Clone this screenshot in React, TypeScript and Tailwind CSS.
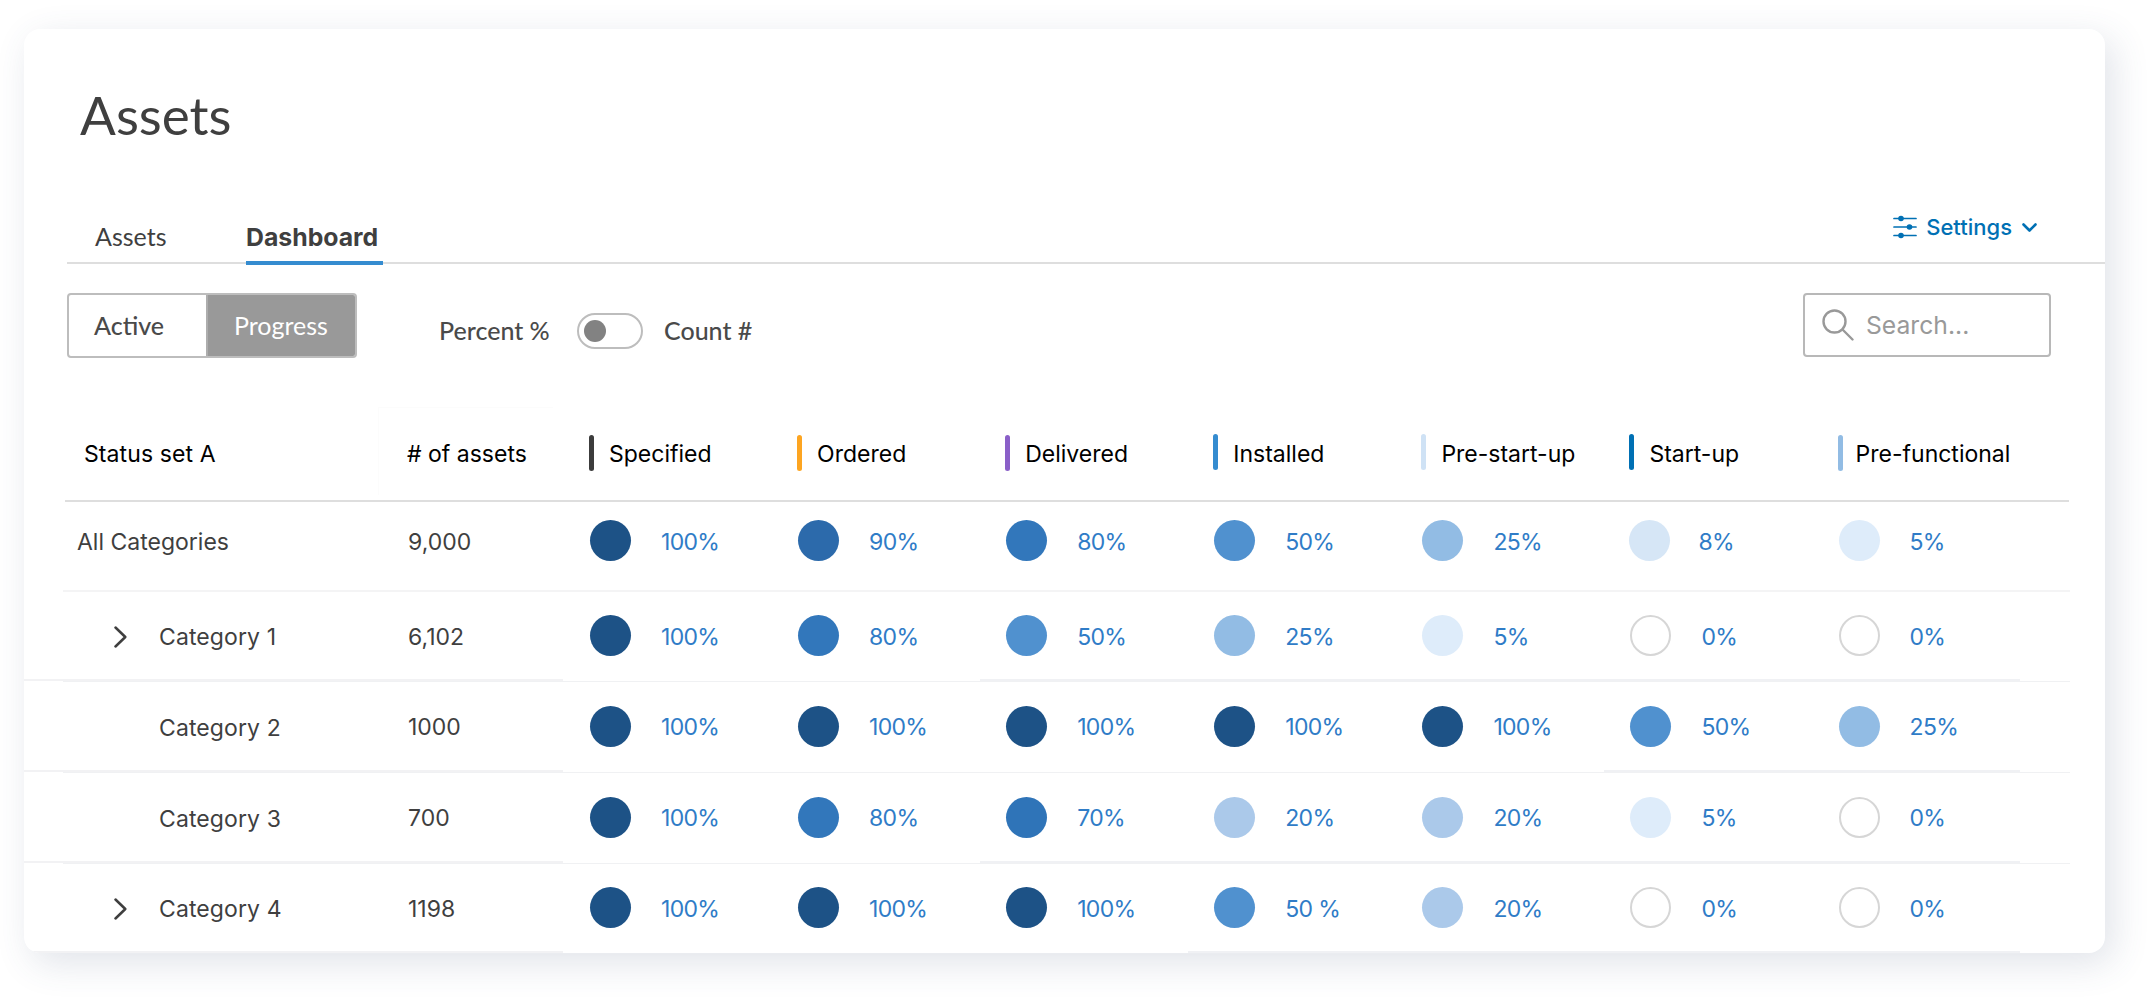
import React from 'react';
import clsx from 'clsx';

interface Status {
    label: string;
    bar: string;
}

interface Row {
    name: string;
    count: string;
    height: string;
    nested?: boolean;
    expandable?: boolean;
    divider?: string;
    values: string[];
}

const statuses: Status[] = [
    { label: 'Specified', bar: 'bg-[#3c3c3c] mt-px mr-[15px]' },
    { label: 'Ordered', bar: 'bg-[#fda521] mt-px mr-[15px]' },
    { label: 'Delivered', bar: 'bg-[#8a5fc8] mt-px mr-[15px]' },
    { label: 'Installed', bar: 'bg-[#358cd0] mr-[15px]' },
    { label: 'Pre-start-up', bar: 'bg-[#cfe2f5] mr-[15px]' },
    { label: 'Start-up', bar: 'bg-[#0070b4] mr-[15px]' },
    { label: 'Pre-functional', bar: 'bg-[#92bce4] mt-px mr-[13px]' },
];

// divider: where the heavier rule picks up again on the right side
const rows: Row[] = [
    { name: 'All Categories', count: '9,000', height: 'h-[88px] pb-[11px]', values: ['100%', '90%', '80%', '50%', '25%', '8%', '5%'] },
    { name: 'Category 1', count: '6,102', height: 'h-[87px]', nested: true, expandable: true, divider: 'w-[1040px]', values: ['100%', '80%', '50%', '25%', '5%', '0%', '0%'] },
    { name: 'Category 2', count: '1000', height: 'h-[88px]', nested: true, divider: 'w-[416px]', values: ['100%', '100%', '100%', '100%', '100%', '50%', '25%'] },
    { name: 'Category 3', count: '700', height: 'h-[88px]', nested: true, divider: 'w-[1040px]', values: ['100%', '80%', '70%', '20%', '20%', '5%', '0%'] },
    { name: 'Category 4', count: '1198', height: 'h-[87px]', nested: true, expandable: true, divider: 'w-[832px]', values: ['100%', '100%', '100%', '50 %', '20%', '0%', '0%'] },
];

const dotColors: Record<string, string> = {
    '100%': 'mr-[30px] bg-[#1d5286]',
    '90%': 'mr-[30px] bg-[#2c6aab]',
    '80%': 'mr-[30px] bg-[#3277bb]',
    '70%': 'mr-[30px] bg-[#2f74b8]',
    '50%': 'mr-[30px] bg-[#5091cf]',
    '50 %': 'mr-[30px] bg-[#5091cf]',
    '25%': 'mr-[30px] bg-[#92bce4]',
    '20%': 'mr-[30px] bg-[#abc9ea]',
    '8%': 'mr-[28px] -ml-px bg-[#d6e6f6]',
    '5%': 'mr-[30px] bg-[#deecfa]',
    '0%': 'mr-[30px] border-2 border-[#d6d6d6] bg-white',
};

const App: React.FC = () => {
    return (
        <div className="h-[997px] w-[2152px] overflow-hidden bg-white pl-6 pt-[29px] font-['Inter',sans-serif] text-[#3f3f3f]">
            <div className="h-[924px] w-[2081px] overflow-hidden rounded-2xl bg-white shadow-[8px_10px_36px_rgba(60,80,120,0.16)]">
                <h1 className="ml-14 h-[171px] pt-[54px] font-['Lato',sans-serif] text-[53px] leading-[64px]">Assets</h1>

                <div className="ml-[43px] flex h-[64px] items-stretch border-b-2 border-[#dedede] font-['Lato',sans-serif] text-[25px] leading-8">
                    <div className="ml-7 w-[151px] pt-5">Assets</div>
                    <div className="-mb-[3px] w-[137px] border-b-4 border-[#358cd0] pt-[21px] font-['Inter',sans-serif] text-[24.8px] leading-8 font-bold">Dashboard</div>
                    <div className="ml-auto mr-[68px] flex items-start pt-[11px] font-['Inter',sans-serif] text-[22px] font-medium text-[#0070b4]">
                        <svg className="mr-[9px] mt-1 h-6 w-6" viewBox="0 0 24 24" fill="currentColor">
                            <path d="M1 3.5h22M1 12h22M1 20.5h22" stroke="currentColor" strokeWidth="1.7" strokeLinecap="round" />
                            <circle cx="8" cy="3.5" r="2.8" />
                            <circle cx="16.5" cy="12" r="2.8" />
                            <circle cx="8" cy="20.5" r="2.8" />
                        </svg>
                        Settings
                        <svg className="ml-[10px] mt-3 h-[9px] w-[15px]" viewBox="0 0 15 9" fill="none" stroke="currentColor" strokeWidth="2.6" strokeLinecap="round" strokeLinejoin="round">
                            <path d="M1.5 1.5l6 6 6-6" />
                        </svg>
                    </div>
                </div>

                <div className="ml-[43px] flex h-[143px] items-start pt-[29px] font-['Lato',sans-serif] text-[25px] text-[#4a4a4a]">
                    <div className="flex h-[65px] w-[290px] overflow-hidden rounded border-2 border-[#bdbdbd] leading-[60px]">
                        <div className="w-[137px] pl-[25px] font-medium">Active</div>
                        <div className="flex-1 border-l-2 border-[#adadad] bg-[#999999] pl-[26px] text-white">Progress</div>
                    </div>
                    <div className="ml-[82px] mt-5 flex h-[36px] items-center font-medium">
                        <span className="w-[138px]">Percent %</span>
                        <span className="flex h-[36px] w-[66px] items-center rounded-full border-2 border-[#bdbdbd] pl-[5px]">
                            <span className="h-[22px] w-[22px] rounded-full bg-[#828282]" />
                        </span>
                        <span className="ml-[21px]">Count #</span>
                    </div>
                    <div className="ml-auto mr-[54px] flex h-[64px] w-[248px] items-center rounded border-2 border-[#b8b8b8] pl-[17px] font-['Inter',sans-serif] text-[24.7px] text-[#999999]">
                        <svg className="mr-3 h-8 w-8" viewBox="0 0 32 32" fill="none" stroke="currentColor" strokeWidth="2.4" strokeLinecap="round">
                            <circle cx="12.5" cy="12.5" r="11" />
                            <path d="M20.5 20.5l10 10" />
                        </svg>
                        <span className="pt-0.5">Search...</span>
                    </div>
                </div>

                <div className="ml-[41px] flex h-[95px] w-[2004px] items-start border-b-2 border-[#dedede] text-[23px] leading-[40px] text-black">
                    <div className="w-[313px] pl-[19px] pt-[27px] tracking-[0.1px]">Status set A</div>
                    <div className="mr-[36px] h-[88px] w-[175px] border-l border-t border-[#fcfcfc] pl-7 pt-[26px]"># of assets</div>
                    {statuses.map((s) => (
                        <div key={s.label} className="flex w-[208.1px] shrink-0 items-start whitespace-nowrap pt-[27px]">
                            <span className={clsx('h-[36px] w-[5px] rounded-full', s.bar)} />
                            {s.label}
                        </div>
                    ))}
                </div>

                {rows.map((row) => (
                    <div key={row.name}>
                        <div className={clsx('flex items-center text-[23px]', row.height)}>
                            <div className={clsx('flex w-[384px] items-center pt-0.5', row.nested ? 'pl-[90px]' : 'pl-[53px]')}>
                                {row.nested && (
                                    <span className="w-[45px]">
                                        {row.expandable && (
                                            <svg className="h-[22px] w-[13px]" viewBox="0 0 13 22" fill="none" stroke="currentColor" strokeWidth="2.5" strokeLinecap="round" strokeLinejoin="round">
                                                <path d="M1.5 1.5l9.8 9.5-9.8 9.5" />
                                            </svg>
                                        )}
                                    </span>
                                )}
                                <span className={clsx('pt-0.5', row.nested && 'tracking-[0.1px]')}>{row.name}</span>
                            </div>
                            <div className="w-[182px] pt-[3px]">{row.count}</div>
                            {row.values.map((value, i) => (
                                <div key={i} className="flex w-[208.1px] shrink-0 items-center tracking-[-0.7px] text-[#2f7cc7]">
                                    <span className={clsx('h-[41px] w-[41px] rounded-full', dotColors[value])} />
                                    <span className="pt-[3px]">{value}</span>
                                </div>
                            ))}
                        </div>
                        {row.divider ? (
                            <>
                                <div className="flex h-0.5 w-[1996px] justify-between">
                                    <div className="w-[539px] bg-[#f2f2f4]" />
                                    <div className={clsx('bg-[#f0f1f4]', row.divider)} />
                                </div>
                                <div className="ml-[39px] h-px w-[2007px] bg-[#f0f1f3]" />
                            </>
                        ) : (
                            <div className="ml-[39px] h-0.5 w-[2007px] bg-[#f4f4f5]" />
                        )}
                    </div>
                ))}
            </div>
        </div>
    );
};

export default App;
